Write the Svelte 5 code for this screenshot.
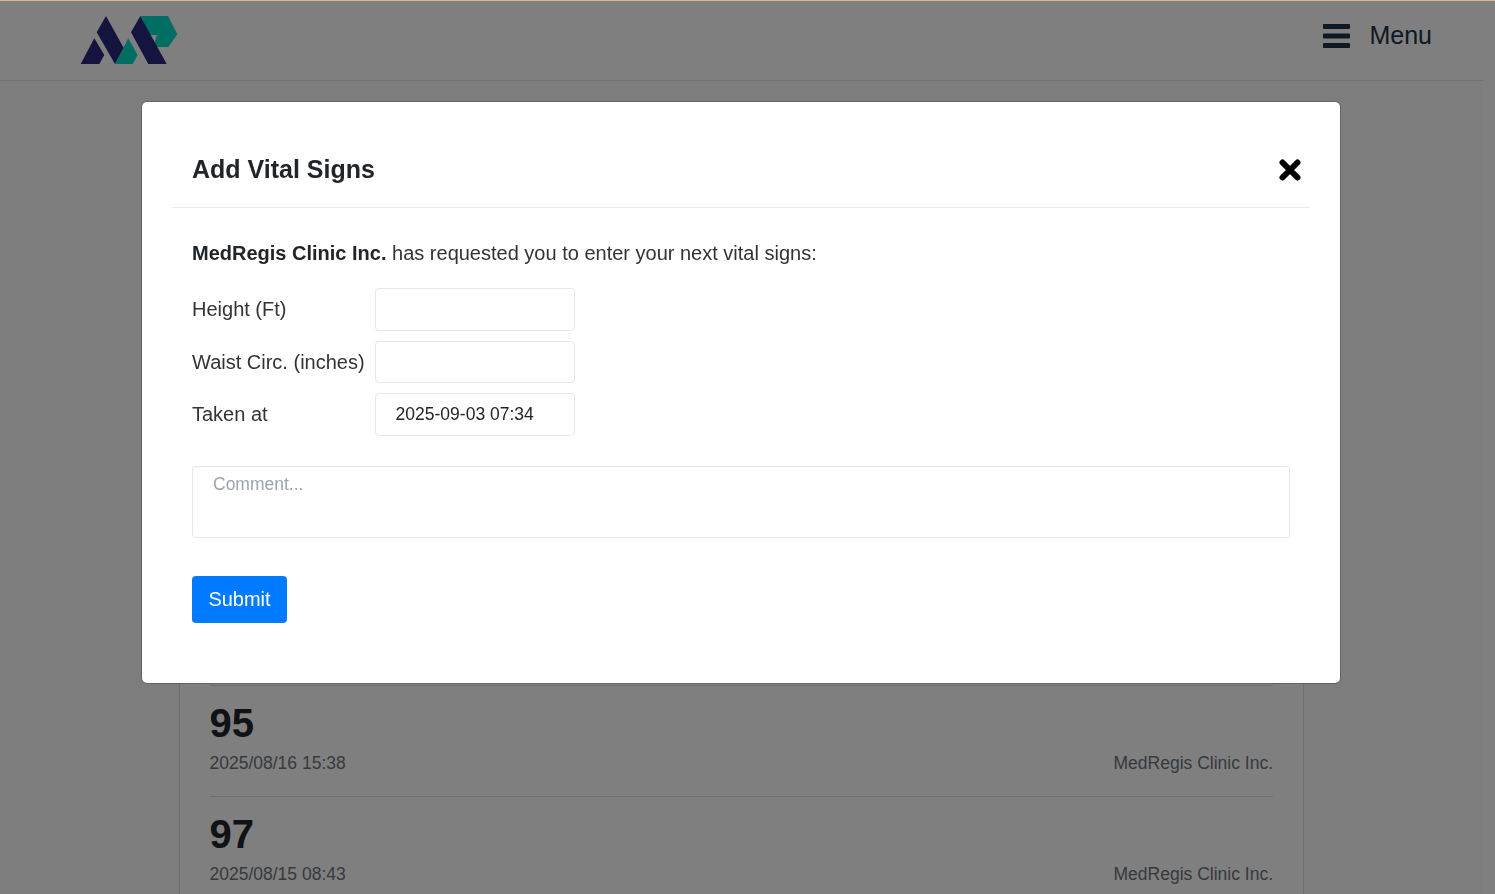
<script>
  const readings = [
    { value: 95, taken: '2025/08/16 15:38', clinic: 'MedRegis Clinic Inc.' },
    { value: 97, taken: '2025/08/15 08:43', clinic: 'MedRegis Clinic Inc.' }
  ];
</script>

<div class="page">
  <header class="topbar">
    <svg class="logo" viewBox="0 0 98 49" width="98" height="49" aria-label="Logo">
      <path class="navy" d="M0.7 48 14.3 22.3 24.3 39 19.3 48Z" />
      <path class="navy" d="M16.7 16.3 26 0 44 32.5 35 48Z" />
      <path class="teal" d="M35 48 48.3 22.3 57.7 39 52.7 48Z" />
      <path class="teal" d="M60.3 0H88L97.3 18.3 88.3 31H72.7L77 19H70Z" />
      <path class="navy" d="M51 16.3 60.3 0 86.7 48H68.3Z" />
    </svg>
    <button class="menu">
      <svg viewBox="0 0 27 24" width="27" height="24">
        <rect y="0" width="27" height="5" rx="1" />
        <rect y="9.5" width="27" height="5" rx="1" />
        <rect y="19" width="27" height="5" rx="1" />
      </svg>
      <span>Menu</span>
    </button>
  </header>

  <main class="content">
    <section class="card">
      {#each readings as r}
        <div class="row">
          <div class="value">{r.value}</div>
          <div class="meta">
            <span>{r.taken}</span>
            <span>{r.clinic}</span>
          </div>
        </div>
      {/each}
    </section>
  </main>
</div>

<div class="backdrop">
  <div class="modal">
    <div class="modal-header">
      <h5>Add Vital Signs</h5>
      <button class="close" aria-label="Close">
        <svg viewBox="0 0 22 22" width="22" height="22">
          <path d="M3.5 3.5 18.5 18.5M18.5 3.5 3.5 18.5" />
        </svg>
      </button>
    </div>
    <div class="modal-body">
      <p><strong>MedRegis Clinic Inc.</strong> has requested you to enter your next vital signs:</p>
      <div class="fields">
        <label for="height">Height (Ft)</label>
        <input id="height" type="text" />
        <label for="waist">Waist Circ. (inches)</label>
        <input id="waist" type="text" />
        <label for="taken">Taken at</label>
        <input id="taken" type="text" value="2025-09-03 07:34" />
      </div>
      <textarea placeholder="Comment..."></textarea>
      <button class="submit">Submit</button>
    </div>
  </div>
</div>

<style>
  :global(body) {
    margin: 0;
    background: #fff;
    font-family: "Liberation Sans", Arial, sans-serif;
    color: #212529;
    overflow: hidden;
  }

  .page {
    width: 1483px;
    height: 894px;
    overflow: hidden;
    background: #fafafa;
  }

  .topbar {
    box-sizing: border-box;
    height: 81px;
    display: flex;
    align-items: flex-start;
    justify-content: space-between;
    padding: 16px 51px 0 79.5px;
    background: #fff;
    border-bottom: 1px solid #e2e2e2;
  }

  .logo {
    display: block;
  }

  .navy {
    fill: #2a287c;
  }

  .teal {
    fill: #00dcc6;
  }

  .menu {
    display: flex;
    align-items: center;
    gap: 19px;
    height: 39px;
    padding: 0;
    border: 0;
    background: none;
    font: inherit;
    font-size: 25px;
    color: #1d3348;
  }

  .menu svg {
    fill: #1d3348;
  }

  .content {
    display: flex;
    justify-content: center;
    padding-top: 29px;
  }

  .card {
    box-sizing: border-box;
    width: 1125px;
    padding: 574px 30px 0 29.5px;
    background: #fff;
    border: 1px solid #dedede;
  }

  .row {
    height: 111px;
    box-sizing: border-box;
    padding-top: 13px;
    border-top: 1px solid #dedede;
  }

  .value {
    font-size: 40px;
    font-weight: 700;
    line-height: 48px;
    color: #212529;
  }

  .meta {
    display: flex;
    justify-content: space-between;
    margin-top: 3px;
    font-size: 17.5px;
    line-height: 26px;
    color: #6c757d;
  }

  .backdrop {
    position: fixed;
    inset: 0;
    background: rgba(0, 0, 0, 0.5);
    border-top: 1px solid #dcb68c;
    box-sizing: border-box;
  }

  .modal {
    box-sizing: border-box;
    position: absolute;
    top: 101px;
    left: 142px;
    width: 1198px;
    padding: 28px 30px 30px;
    background: #fff;
    border-radius: 5px;
    box-shadow: 0 0 0 1px rgba(0, 0, 0, 0.2);
  }

  .modal-header {
    display: flex;
    align-items: center;
    justify-content: space-between;
    padding: 21px 20px 18.5px;
    border-bottom: 1px solid #e9ecef;
  }

  h5 {
    margin: 0;
    font-size: 25px;
    line-height: 37.5px;
    font-weight: 700;
  }

  .close {
    display: block;
    padding: 0;
    border: 0;
    background: none;
    line-height: 0;
    margin-right: -11px;
  }

  .close path {
    fill: none;
    stroke: #000;
    stroke-width: 6;
    stroke-linecap: round;
  }

  .modal-body {
    padding: 30px 20px;
  }

  p {
    margin: 0 0 20px;
    font-size: 20px;
    line-height: 30px;
    color: #333;
  }

  p strong {
    color: #212529;
  }

  .fields {
    display: grid;
    grid-template-columns: max-content 200px;
    column-gap: 10px;
    row-gap: 10px;
    align-items: center;
    font-size: 20px;
    line-height: 22px;
    color: #333;
  }

  input,
  textarea {
    box-sizing: border-box;
    display: block;
    border: 1px solid #e5e7eb;
    border-radius: 4px;
    background: #fff;
    font-family: inherit;
    font-size: 17.5px;
    color: #212529;
    padding: 0 20px;
    outline: none;
  }

  input {
    height: 42.5px;
    width: 200px;
  }

  textarea {
    width: 100%;
    height: 72px;
    margin-top: 30.5px;
    padding-top: 5px;
    line-height: 24px;
    resize: none;
  }

  textarea::placeholder {
    color: #9ca3af;
    opacity: 1;
  }

  .submit {
    display: block;
    margin-top: 38px;
    width: 95px;
    height: 47px;
    padding: 0;
    border: 0;
    border-radius: 4px;
    background: #007bff;
    color: #fff;
    font: inherit;
    font-size: 20px;
  }
</style>
